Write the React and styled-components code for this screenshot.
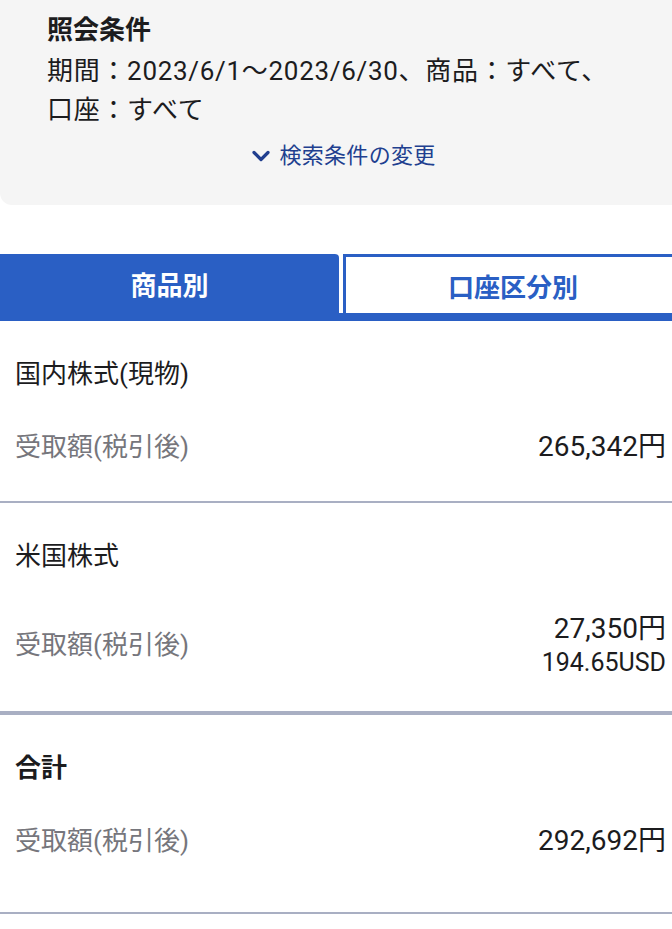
import React from "react";
import styled, { createGlobalStyle } from "styled-components";

const Colors = {
  text: "#1c1c1e",
  gray: "#76767c",
  panel: "#f5f5f5",
  blue: "#2a5fc4",
  navy: "#213f8f",
  line: "#a9afc3",
};

const GlobalStyle = createGlobalStyle`
  html, body {
    margin: 0;
    padding: 0;
    background: #ffffff;
    overflow-x: hidden;
  }
  body {
    font-family: Roboto, "Noto Sans CJK JP", sans-serif;
    color: ${Colors.text};
  }
`;

const Page = styled.div`
  width: 672px;
  overflow: hidden;
`;

const ConditionPanel = styled.div`
  background: ${Colors.panel};
  border-bottom-left-radius: 12px;
  padding: 10px 0 34px 47px;
  margin-right: -20px;
`;

const PanelTitle = styled.div`
  font-size: 26px;
  font-weight: 700;
  line-height: 40px;
`;

const PanelText = styled.div`
  font-size: 26px;
  line-height: 39px;
  letter-spacing: 0.7px;
  margin-top: 2px;
`;

const ChangeLink = styled.a`
  display: flex;
  align-items: center;
  justify-content: center;
  gap: 9px;
  margin: 11px 0 0 -51px;
  font-size: 22px;
  line-height: 30px;
  letter-spacing: 0.3px;
  color: ${Colors.navy};
  text-decoration: none;
`;

const Tabs = styled.div`
  display: grid;
  grid-template-columns: 339px 340px;
  gap: 4px;
  margin-top: 49px;
  border-bottom: 8px solid ${Colors.blue};
`;

const Tab = styled.div`
  height: 59px;
  box-sizing: border-box;
  display: flex;
  align-items: center;
  justify-content: center;
  font-size: 26px;
  font-weight: 700;
  border-radius: 0 4px 0 0;
  background: ${(p) => (p.$active ? Colors.blue : "#ffffff")};
  color: ${(p) => (p.$active ? "#ffffff" : Colors.blue)};
  border: ${(p) => (p.$active ? "none" : `3px solid ${Colors.blue}`)};
  border-bottom: none;
`;

const Section = styled.div`
  padding: 35px 6px ${(p) => p.$bottom || 36}px 15px;
  border-bottom: ${(p) => p.$line || 2}px solid ${Colors.line};
  display: flex;
  flex-direction: column;
  gap: 37px;
`;

const SectionTitle = styled.div`
  font-size: 26px;
  line-height: 36px;
  font-weight: ${(p) => (p.$bold ? 700 : 400)};
`;

const AmountRow = styled.div`
  display: flex;
  justify-content: space-between;
  align-items: center;
`;

const AmountLabel = styled.div`
  font-size: 26px;
  line-height: 36px;
  color: ${Colors.gray};
`;

const AmountValues = styled.div`
  display: flex;
  flex-direction: column;
  align-items: flex-end;
`;

const Amount = styled.div`
  font-size: 28px;
  line-height: 36px;
`;

const SubAmount = styled.div`
  font-size: 25px;
  line-height: 32px;
`;

const Chevron = () => (
  <svg width="18" height="12" viewBox="0 0 18 12" aria-hidden="true">
    <path
      d="M2 2.5 L9 9.5 L16 2.5"
      fill="none"
      stroke={Colors.navy}
      strokeWidth="3.2"
      strokeLinecap="round"
      strokeLinejoin="round"
    />
  </svg>
);

const sections = [
  { title: "国内株式(現物)", amount: "265,342円" },
  { title: "米国株式", amount: "27,350円", sub: "194.65USD", line: 4, bottom: 32 },
  { title: "合計", amount: "292,692円", bold: true, bottom: 53 },
];

const App = () => {
  return (
    <Page>
      <GlobalStyle />
      <ConditionPanel>
        <PanelTitle>照会条件</PanelTitle>
        <PanelText>
          期間：2023/6/1〜2023/6/30、商品：すべて、
          <br />
          口座：すべて
        </PanelText>
        <ChangeLink href="#">
          <Chevron />
          検索条件の変更
        </ChangeLink>
      </ConditionPanel>

      <Tabs>
        <Tab $active>商品別</Tab>
        <Tab>口座区分別</Tab>
      </Tabs>

      {sections.map((s) => (
        <Section key={s.title} $line={s.line} $bottom={s.bottom}>
          <SectionTitle $bold={s.bold}>{s.title}</SectionTitle>
          <AmountRow>
            <AmountLabel>受取額(税引後)</AmountLabel>
            <AmountValues>
              <Amount>{s.amount}</Amount>
              {s.sub && <SubAmount>{s.sub}</SubAmount>}
            </AmountValues>
          </AmountRow>
        </Section>
      ))}
    </Page>
  );
};

export default App;
